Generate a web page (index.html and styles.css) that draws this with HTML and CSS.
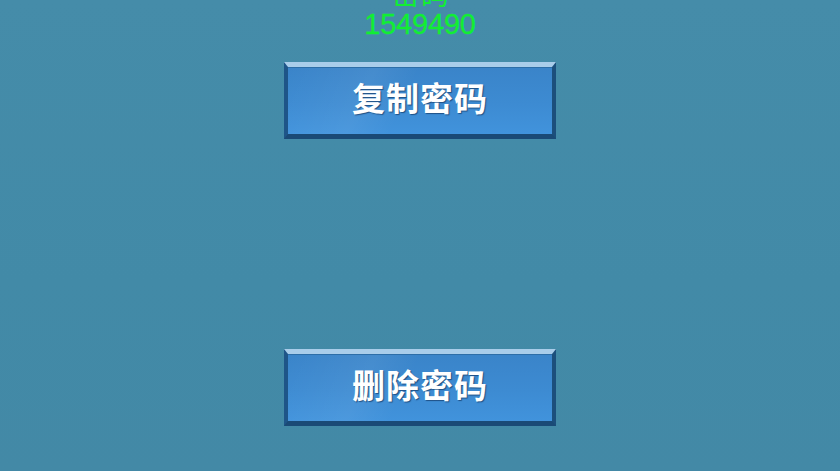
FILE: index.html
```html
<!DOCTYPE html>
<html lang="zh">
<head>
<meta charset="utf-8">
<link rel="stylesheet" href="styles.css">
</head>
<body>
<main class="screen">
  <div class="info">
    <div class="label">密码</div>
    <div class="code">1549490</div>
  </div>
  <button class="btn btn-copy">复制密码</button>
  <button class="btn btn-delete">删除密码</button>
</main>
</body>
</html>
```

FILE: styles.css
```css
html, body {
  margin: 0;
  padding: 0;
  width: 840px;
  height: 471px;
  overflow: hidden;
  background: #438ba8;
}

.screen {
  display: flex;
  flex-direction: column;
  align-items: center;
  height: 471px;
  background: linear-gradient(180deg, #458ca9 0%, #428aa7 60%, #4389a6 100%);
  font-family: "Liberation Sans", "Noto Sans CJK SC", sans-serif;
}

.info {
  display: flex;
  flex-direction: column;
  align-items: center;
  margin-top: -22px;
  color: #11ee33;
  font-size: 29px;
}

.label {
  font-family: "Noto Sans CJK SC", sans-serif;
  line-height: 29px;
  height: 29px;
  overflow: hidden;
  margin-bottom: 2px;
}

.code {
  line-height: 30px;
  height: 30px;
  letter-spacing: -0.2px;
  -webkit-text-stroke: 0.3px #11ee33;
}

.btn {
  box-sizing: border-box;
  width: 272px;
  height: 77px;
  padding: 0 0 8px 0;
  border-style: solid;
  border-width: 5px 4px 5px 4px;
  border-color: #a9cdea #1c4f7c #1a4a76 #1e5588;
  background:
    linear-gradient(115deg, rgba(255,255,255,0) 0%, rgba(255,255,255,0.06) 30%, rgba(255,255,255,0) 45%),
    linear-gradient(180deg, #3a84c9 0%, #3d8bd2 55%, #4193dc 100%);
  box-shadow: inset 0 1px 0 #2d6ea8;
  color: #ffffff;
  font-family: "Noto Sans CJK SC", sans-serif;
  font-size: 33px;
  font-weight: 700;
  letter-spacing: 1px;
  text-shadow: 1px 1px 1px rgba(10, 40, 80, 0.6);
  display: flex;
  align-items: center;
  justify-content: center;
}

.btn-copy {
  margin-top: 23px;
}

.btn-delete {
  margin-top: 210px;
}
```
